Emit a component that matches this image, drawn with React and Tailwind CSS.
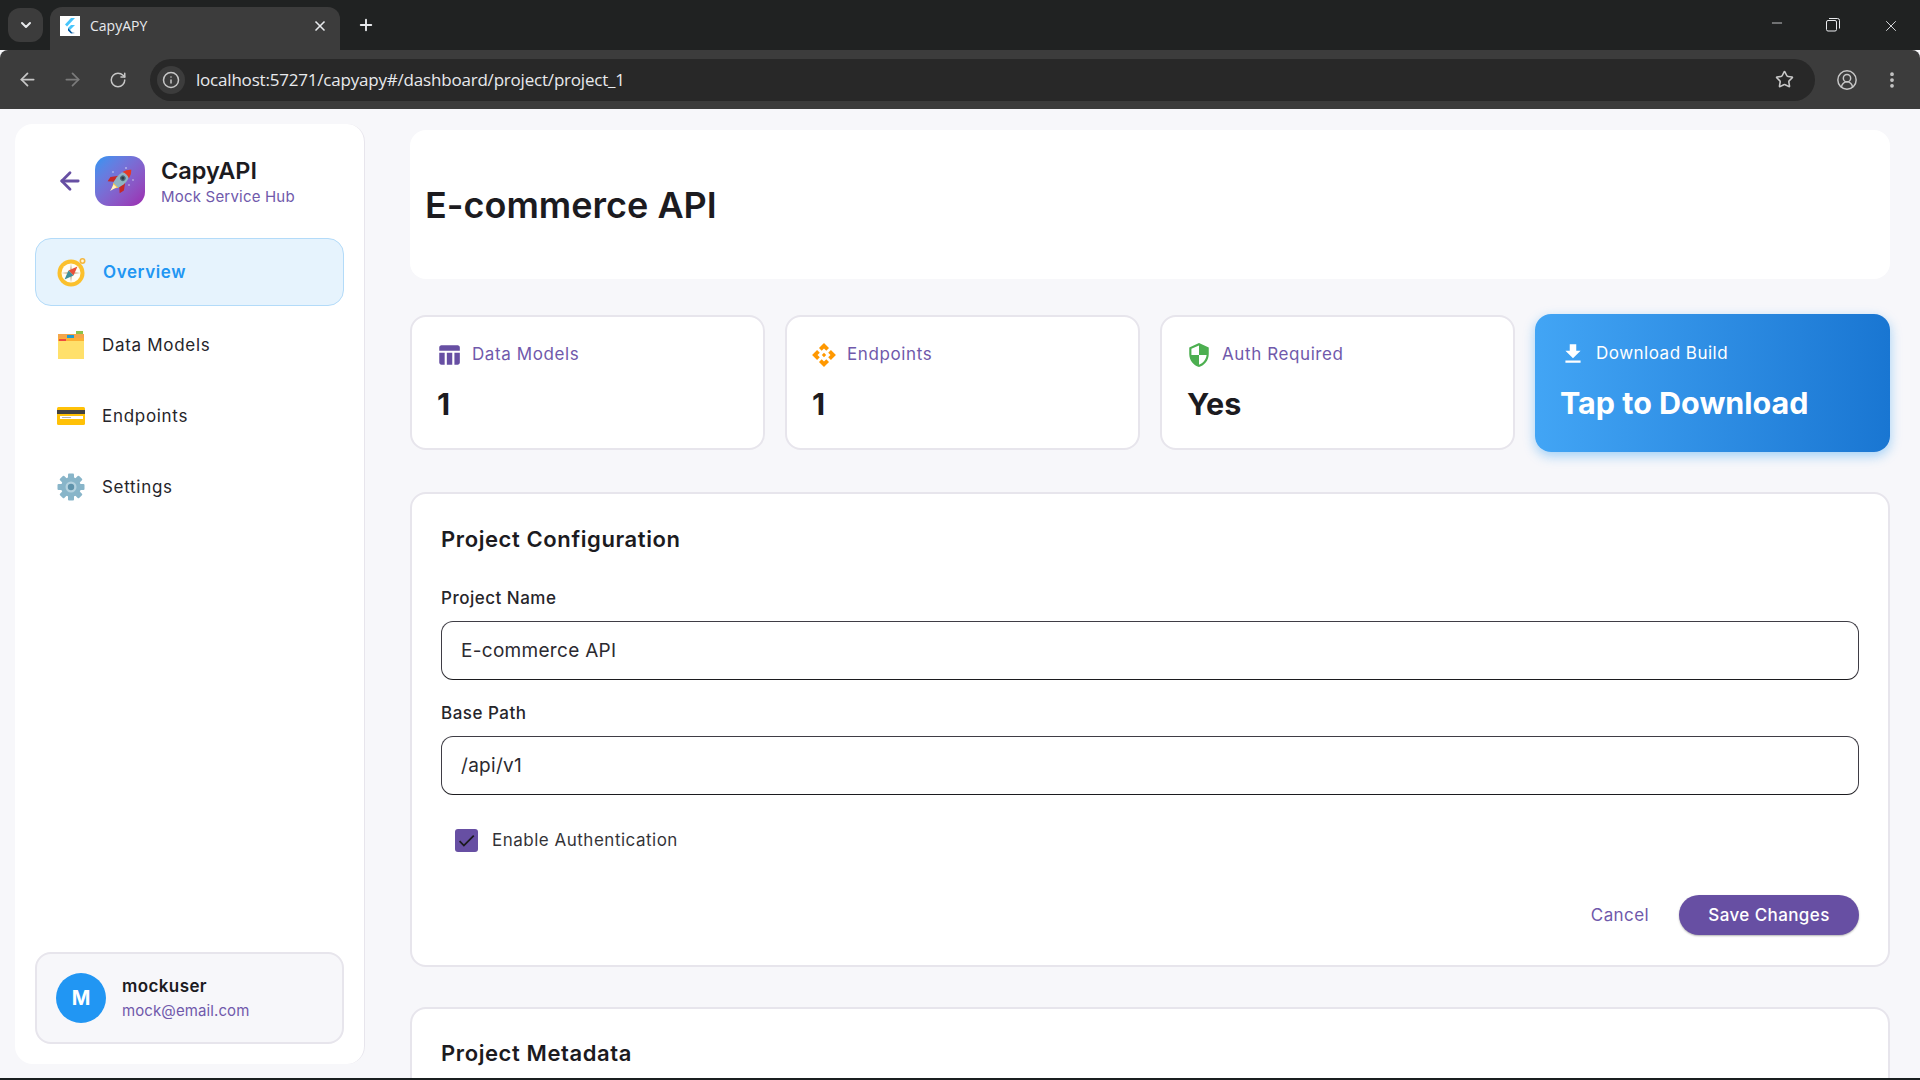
import React from 'react';
import { ArrowLeft, ArrowRight, ChevronDown, CircleUserRound, EllipsisVertical, Info, Minus, Plus, RotateCw, Star, X } from 'lucide-react';
import { MdApi, MdFileDownload, MdSecurity, MdTableChart, MdCheck } from 'react-icons/md';

const RocketIcon = () => (
  <svg width="32" height="32" viewBox="0 0 32 32">
    <circle cx="22" cy="3" r="0.8" fill="#dfe6f5" />
    <circle cx="9" cy="7" r="0.7" fill="#dfe6f5" />
    <circle cx="29" cy="15" r="0.7" fill="#dfe6f5" />
    <circle cx="25" cy="20" r="0.7" fill="#dfe6f5" />
    <g transform="rotate(45 16 16)">
      <path d="M16 27 L12.5 22 Q16 20 19.5 22 Z" fill="#f9c74f" />
      <path d="M16 30 L14 23 L18 23 Z" fill="#fff3c4" />
      <path d="M11.6 13 L6.5 20 L7.5 25 L12 21 Z" fill="#c62828" />
      <path d="M20.4 13 L25.5 20 L24.5 25 L20 21 Z" fill="#c62828" />
      <path d="M16 2 Q22 8 21 16 L19.5 22 L12.5 22 L11 16 Q10 8 16 2 Z" fill="#8fb3c4" />
      <path d="M16 0 Q19.5 3 20.6 8 Q16 5.8 11.4 8 Q12.5 3 16 0 Z" fill="#e53925" />
      <circle cx="16" cy="12" r="2.8" fill="#4f6b7a" />
      <circle cx="16" cy="12" r="1.5" fill="#2e3f49" />
    </g>
  </svg>
);

const CompassIcon = () => (
  <svg width="30" height="30" viewBox="0 0 30 30">
    <circle cx="25.5" cy="4" r="2.2" fill="#fff7dc" stroke="#f4b63f" strokeWidth="1.6" />
    <circle cx="14" cy="16" r="13.5" fill="#fbc02d" />
    <circle cx="14" cy="16" r="9.5" fill="#fffdf5" />
    <path d="M14 6.5 L15.5 14.5 L23.5 16 L15.5 17.5 L14 25.5 L12.5 17.5 L4.5 16 L12.5 14.5 Z" fill="#d9c4a8" />
    <path d="M20.5 9.5 L16.5 18.5 L11.5 13.5 Z" fill="#e8503a" />
    <path d="M7.5 22.5 L11.5 13.5 L16.5 18.5 Z" fill="#3f8f9b" />
  </svg>
);

const FolderIcon = () => (
  <svg width="28" height="28" viewBox="0 0 28 28">
    <rect x="19" y="0" width="7" height="4" fill="#8bc34a" />
    <rect x="1" y="3" width="26" height="6" fill="#f4a64a" />
    <rect x="10" y="4" width="7" height="3" fill="#1e9bd1" />
    <rect x="1" y="7" width="26" height="3" fill="#fbb034" />
    <rect x="2" y="8" width="7" height="3" fill="#ef4b3f" />
    <rect x="1" y="10" width="26" height="18" fill="#ffe06b" />
  </svg>
);

const CardIcon = () => (
  <svg width="28" height="20" viewBox="0 0 28 20">
    <rect x="0" y="1" width="28" height="18" rx="1.5" fill="#ffc107" />
    <rect x="0" y="4" width="28" height="4" fill="#424242" />
    <rect x="3" y="10" width="23" height="3" fill="#ffffff" />
    <path d="M5 11.5 H14" stroke="#9e9e9e" strokeWidth="0.8" />
  </svg>
);

const GearIcon = () => (
  <svg width="28" height="28" viewBox="0 0 28 28">
    {[0, 45, 90, 135].map(deg => (
      <rect key={deg} x="11" y="0.5" width="6" height="27" rx="1" fill="#88b5c9" transform={`rotate(${deg} 14 14)`} />
    ))}
    <circle cx="14" cy="14" r="10" fill="#88b5c9" />
    <circle cx="14" cy="14" r="5.5" fill="#b4d2df" />
    <circle cx="14" cy="14" r="3.2" fill="#5f93ab" />
  </svg>
);

const FlutterIcon = () => (
  <svg width="20" height="20" viewBox="0 0 20 20" className="bg-white">
    <path d="M11 2 L15 2 L7 10.5 L5 8.5 Z" fill="#47c5fb" />
    <path d="M11 9 L15 9 L10 14 L8 12 Z" fill="#47c5fb" />
    <path d="M8 12 L10 14 L12 16.5 L15 17 L11 17.5 L8 14.5 Z" fill="#00569e" />
  </svg>
);

const RestoreIcon = () => (
  <svg width="14" height="14" viewBox="0 0 14 14" fill="none" stroke="#e8eaed" strokeWidth="1">
    <rect x="0.5" y="2.5" width="10" height="10.5" rx="1.5" />
    <path d="M3 0.5 H11.5 Q13.5 0.5 13.5 2.5 V10.5" />
  </svg>
);

const BrowserChrome = () => (
  <div className="shrink-0 font-['Open_Sans',sans-serif]">
    <div className="flex h-[50px] bg-[#202222] text-[#e8eaed]">
      <div className="ml-2 mt-2 flex h-[34px] w-[35px] items-center justify-center rounded-xl bg-[#3c3c3c]">
        <ChevronDown size={16} strokeWidth={3} />
      </div>
      <div className="ml-[7px] mt-[7px] flex h-[43px] w-[290px] items-center rounded-t-xl bg-[#3c3c3c] pb-[6px] pl-[10px] pr-3">
        <FlutterIcon />
        <span className="ml-[10px] flex-1 text-[14px]">CapyAPY</span>
        <X size={16} strokeWidth={2.5} />
      </div>
      <div className="ml-[17px] mt-[16px]">
        <Plus size={18} strokeWidth={2.5} />
      </div>
      <div className="ml-auto flex items-start pr-[20px] pt-[16px]">
        <Minus size={16} strokeWidth={1.2} className="mr-[41px] mt-[-1px]" />
        <div className="mr-[42px] mt-[2px]"><RestoreIcon /></div>
        <X size={18} strokeWidth={1.2} className="mt-[1px]" />
      </div>
    </div>
    <div className="flex h-[59px] items-center rounded-t-lg bg-[#3c3c3c] pl-[17px] text-[#c7c7c7]">
      <ArrowLeft size={21} strokeWidth={2} />
      <ArrowRight size={21} strokeWidth={2} className="ml-[24px] text-[#7b7b7b]" />
      <RotateCw size={18} strokeWidth={2} className="ml-[26px]" />
      <div className="ml-[23px] flex h-[42px] w-[1665px] items-center rounded-full bg-[#282828] pl-[7px] pr-[21px]">
        <div className="flex h-7 w-7 items-center justify-center rounded-full bg-[#3c3c3c]">
          <Info size={18} strokeWidth={2} />
        </div>
        <span className="ml-[11px] flex-1 text-[17px] tracking-[-0.2px] text-[#e8eaed]">localhost:57271/capyapy#/dashboard/project/project_1</span>
        <Star size={19} strokeWidth={2} />
      </div>
      <CircleUserRound size={22} strokeWidth={1.6} className="ml-[21px]" />
      <EllipsisVertical size={20} strokeWidth={2.5} className="ml-[24px]" />
    </div>
  </div>
);

const Sidebar = () => (
  <aside className="flex h-[940px] w-[350px] shrink-0 flex-col rounded-[18px] border-r border-[#e7e5ec] bg-white px-5">
    <div className="mt-[31px] flex items-center">
      <ArrowLeft size={28} strokeWidth={2.4} className="ml-[21px] text-[#674fa3]" />
      <div className="ml-[11px] flex h-[50px] w-[50px] items-center justify-center rounded-[14px] bg-gradient-to-br from-[#2196f3] to-[#9c27b0]">
        <RocketIcon />
      </div>
      <div className="ml-4">
        <div className="text-[23.5px] font-semibold leading-[32px] text-[#1c1b1f]">CapyAPI</div>
        <div className="text-[15px] leading-[20px] tracking-[0.2px] text-[#7059ab]">Mock Service Hub</div>
      </div>
    </div>

    <nav className="mt-[31px] flex flex-col">
      <div className="mb-[13px] flex h-[68px] items-center rounded-[16px] border border-[#b3dbf9] bg-[#e6f3fd] pl-[21px]">
        <CompassIcon />
        <span className="ml-[16px] mt-[1px] text-[17px] font-semibold tracking-[0.6px] text-[#2196f3]">Overview</span>
      </div>
      <div className="flex flex-col gap-[19px]">
        <div className="flex h-[52px] items-center pl-[22px]">
          <FolderIcon />
          <span className="ml-[17px] mt-[2px] text-[17px] tracking-[0.7px] text-[#26252a]">Data Models</span>
        </div>
        <div className="flex h-[52px] items-center pl-[22px]">
          <CardIcon />
          <span className="ml-[17px] mt-[2px] text-[17px] tracking-[0.7px] text-[#26252a]">Endpoints</span>
        </div>
        <div className="flex h-[52px] items-center pl-[22px]">
          <GearIcon />
          <span className="ml-[17px] mt-[2px] text-[17px] tracking-[0.7px] text-[#26252a]">Settings</span>
        </div>
      </div>
    </nav>

    <div className="mb-5 mt-auto flex h-[92px] items-center rounded-[16px] border-2 border-[#e7e5ec] bg-[#f7f7fa] pl-[19px]">
      <div className="flex h-[50px] w-[50px] items-center justify-center rounded-full bg-[#2196f3] text-[20px] font-bold text-white">M</div>
      <div className="ml-4">
        <div className="text-[17px] font-semibold leading-[24px] tracking-[0.4px] text-[#1c1b1f]">mockuser</div>
        <div className="mt-[1px] text-[15px] leading-[24px] tracking-[0.1px] text-[#7059ab]">mock@email.com</div>
      </div>
    </div>
  </aside>
);

const StatCard = ({ icon, label, value }) => (
  <div className="flex h-[135px] flex-col rounded-[16px] border-2 border-[#e7e5ec] bg-white pl-[24px] pt-[23px]">
    <div className="flex h-[30px] items-center">
      {icon}
      <span className="ml-[10px] text-[17px] tracking-[0.6px] text-[#7059ab]">{label}</span>
    </div>
    <div className="ml-[1px] mt-[14px] text-[30.5px] font-bold leading-[40px] text-[#1c1b1f]">{value}</div>
  </div>
);

const Field = ({ label, value }) => (
  <div>
    <div className="text-[17px] font-medium leading-[24px] tracking-[0.5px] text-[#26252a]">{label}</div>
    <div className="mt-[11px] flex h-[59px] items-center rounded-[12px] border-[1.5px] border-[#3f3d45] border-b-[#1c1b1f] pl-[19px] pt-[1px] text-[19px] tracking-[0.3px] text-[#2b2a30]">{value}</div>
  </div>
);

export default function App() {
  return (
    <div className="flex h-screen flex-col overflow-hidden bg-[#f7f7fa] font-['Inter',sans-serif]">
      <BrowserChrome />

      <div className="flex min-h-0 flex-1 pl-[15px] pt-[15px]">
        <Sidebar />

        <main className="ml-[45px] w-[1480px] pt-[6px]">
          <div className="flex h-[149px] items-center rounded-[16px] bg-white pl-[15px]">
            <h1 className="text-[36px] font-semibold text-[#1c1b1f]">E-commerce API</h1>
          </div>

          <div className="mt-[36px] grid grid-cols-4 gap-5">
            <StatCard icon={<MdTableChart size={26} className="text-[#674fa3]" />} label="Data Models" value="1" />
            <StatCard icon={<MdApi size={26} className="text-[#ff9800]" />} label="Endpoints" value="1" />
            <StatCard icon={<MdSecurity size={26} className="text-[#4caf50]" />} label="Auth Required" value="Yes" />
            <div className="-my-px flex h-[138px] flex-col rounded-[16px] bg-gradient-to-r from-[#42a5f5] to-[#1976d2] pl-[25px] pt-[25px] shadow-[0_4px_12px_rgba(33,150,243,0.4)]">
              <div className="flex h-[30px] items-center">
                <MdFileDownload size={26} className="text-white" />
                <span className="ml-[10px] text-[17px] tracking-[0.5px] text-white">Download Build</span>
              </div>
              <div className="mt-[14px] text-[30.5px] font-bold leading-[40px] text-white">Tap to Download</div>
            </div>
          </div>

          <section className="mt-[41px] h-[475px] rounded-[16px] border-2 border-[#e7e5ec] bg-white px-[29px] pt-[29px]">
            <h2 className="text-[22px] font-semibold leading-[32px] tracking-[0.6px] text-[#1c1b1f]">Project Configuration</h2>
            <div className="mt-[31px] flex flex-col gap-[21px]">
              <Field label="Project Name" value="E-commerce API" />
              <Field label="Base Path" value="/api/v1" />
            </div>
            <div className="ml-[14px] mt-[33px] flex items-center">
              <div className="flex h-[23px] w-[23px] items-center justify-center rounded-[3px] bg-[#674fa3] text-[#1c1b1f]">
                <MdCheck size={21} />
              </div>
              <span className="ml-[14px] text-[17px] tracking-[0.5px] text-[#1c1b1f] opacity-90">Enable Authentication</span>
            </div>
            <div className="mt-[41px] flex items-center justify-end">
              <span className="pt-[3px] text-[17px] tracking-[0.4px] text-[#7059ab]">Cancel</span>
              <div className="ml-[30px] flex h-[40px] w-[180px] items-center justify-center rounded-full bg-[#674fa3] pt-[3px] text-[17px] font-medium tracking-[0.4px] text-white shadow-[0_1px_2px_rgba(0,0,0,0.3)]">Save Changes</div>
            </div>
          </section>

          <section className="mt-[40px] h-[200px] rounded-[16px] border-2 border-[#e7e5ec] bg-white px-[29px] pt-[28px]">
            <h2 className="text-[22px] font-semibold leading-[32px] tracking-[0.6px] text-[#1c1b1f]">Project Metadata</h2>
          </section>
        </main>
      </div>

      <div className="h-[2px] shrink-0 bg-[#1a1f20]" />
    </div>
  );
}
